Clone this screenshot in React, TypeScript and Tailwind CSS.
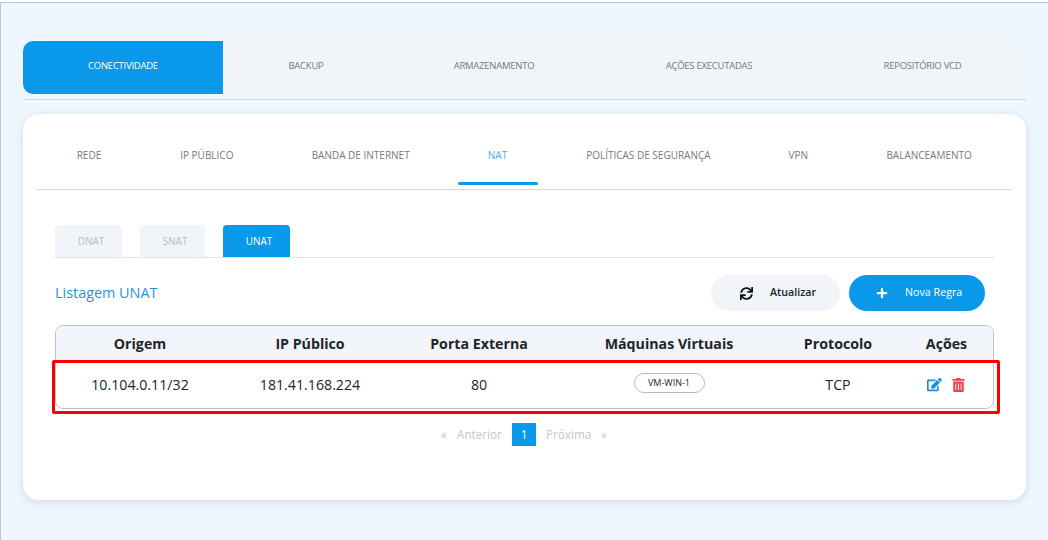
import { FaSync, FaEdit, FaTrashAlt, FaPlus } from "react-icons/fa";

const top = [
  { t: "BACKUP", w: "w-[166px]" },
  { t: "ARMAZENAMENTO", w: "w-[210px]" },
  { t: "AÇÕES EXECUTADAS", w: "w-[220px]" },
  { t: "REPOSITÓRIO VCD", w: "w-[207px]" },
];
const sub = [
  { t: "REDE", w: "w-[104px]" },
  { t: "IP PÚBLICO", w: "w-[132px]" },
  { t: "BANDA DE INTERNET", w: "w-[176px]" },
  { t: "NAT", w: "w-[98px]", active: true },
  { t: "POLÍTICAS DE SEGURANÇA", w: "w-[204px]" },
  { t: "VPN", w: "w-[96px]" },
  { t: "BALANCEAMENTO", w: "w-[166px]" },
];
const cols = "grid grid-cols-[168px_172px_166px_214px_124px_93px] text-center";

export default function App() {
  return (
    <div className="relative h-[540px] w-[1048px] overflow-hidden bg-white pt-[2px] font-['Open_Sans',sans-serif]">
      <div className="h-[538px] border-t border-l border-[#bfc3cb] bg-[#eff7fe] pl-[22px] pt-[38px]">
        <div className="w-[1003px] border-b border-[#cdd5e0] pb-[5px]">
          <div className="flex h-[53px] items-center rounded-[10px] bg-[#f1f5f8] pb-[3px] text-[9.5px] tracking-[-0.25px] text-[#77797c]">
            <div className="-mb-[3px] flex h-[53px] w-[200px] items-center justify-center rounded-l-[10px] bg-[#0a98ea] pb-[3px] text-white">CONECTIVIDADE</div>
            {top.map((x) => (
              <div key={x.t} className={`${x.w} text-center`}>{x.t}</div>
            ))}
          </div>
        </div>
        <div className="mt-[14px] h-[386px] w-[1003px] rounded-[16px] bg-white px-[14px] shadow-[0_2px_10px_rgba(120,140,170,0.25)]">
          <div className="flex h-[76px] w-[975px] border-b border-[#d3d6da] text-[10px] text-[#77797c]">
            {sub.map((x) => (
              <div key={x.t} className={`${x.w} relative pt-[34px] text-center leading-[14px] ${x.active ? "text-[#4aaef0]" : ""}`}>
                {x.t}
                {x.active && <div className="absolute bottom-[4px] left-[9px] h-[3px] w-[80px] rounded-full bg-[#0a98ea]" />}
              </div>
            ))}
          </div>
          <div className="ml-[18px] mt-[35px] flex h-[33px] w-[939px] items-stretch gap-[18px] border-b border-[#dfe2e6] text-[10px]">
            <div className="flex w-[67px] items-center justify-center rounded-t-[4px] bg-[#f1f4f8] pl-[5px] text-[#b9bcc0]">DNAT</div>
            <div className="flex w-[65px] items-center justify-center rounded-t-[4px] bg-[#f1f4f8] pl-[5px] text-[#b9bcc0]">SNAT</div>
            <div className="flex w-[67px] items-center justify-center rounded-t-[4px] bg-[#0a98ea] pl-[5px] text-white">UNAT</div>
          </div>
          <div className="ml-[18px] mt-[17px] flex h-[36px] w-[930px] items-center justify-between">
            <div className="text-[14.4px] text-[#1f93e0]">Listagem UNAT</div>
            <div className="flex gap-[9px] text-[10.7px]">
              <div className="flex h-[36px] w-[129px] items-center rounded-full bg-[#f1f4f8] pl-[29px] font-semibold text-[#212529]">
                <FaSync className="mr-[17px] h-[13px] w-[13px] text-[#111]" />
                <span className="-mt-[2px]">Atualizar</span>
              </div>
              <div className="flex h-[36px] w-[136px] items-center rounded-full bg-[#0a98ea] pl-[27px] text-white">
                <FaPlus className="mr-[17px] h-[12px] w-[12px]" />
                <span className="-mt-[2px]">Nova Regra</span>
              </div>
            </div>
          </div>
          <div className="ml-[18px] mt-[14px] h-[84px] w-[939px] overflow-hidden rounded-[8px] border border-[#bfc3c9] text-[14.2px] text-[#212529]">
            <div className={`${cols} h-[35px] items-center bg-[#f1f4f8] font-bold`}>
              <div>Origem</div>
              <div>IP Público</div>
              <div>Porta Externa</div>
              <div>Máquinas Virtuais</div>
              <div>Protocolo</div>
              <div>Ações</div>
            </div>
            <div className={`${cols} h-[47px] items-center`}>
              <div>10.104.0.11/32</div>
              <div>181.41.168.224</div>
              <div>80</div>
              <div className="flex justify-center">
                <span className="-mt-[4px] flex h-[20px] w-[71px] items-center justify-center rounded-full border border-[#b5bac2] text-[9px]">VM-WIN-1</span>
              </div>
              <div>TCP</div>
              <div className="flex items-center justify-center gap-[10px] pr-[1px]">
                <FaEdit className="h-[15px] w-[15px] text-[#1c8fe3]" />
                <FaTrashAlt className="h-[14px] w-[13px] text-[#ef3e52]" />
              </div>
            </div>
          </div>
          <div className="ml-[18px] mt-[14px] flex h-[23px] w-[939px] items-center text-[11.7px] text-[#c3c7cc]">
            <span className="ml-[386px] w-[16px]">«</span>
            <span className="w-[55px]">Anterior</span>
            <span className="flex h-[23px] w-[24px] items-center justify-center bg-[#0a98ea] text-white">1</span>
            <span className="ml-[10px] w-[55px]">Próxima</span>
            <span>»</span>
          </div>
        </div>
      </div>
      <div className="absolute left-[52px] top-[360px] h-[54px] w-[948px] rounded-[2px] border-[3px] border-[#fa0000]" />
    </div>
  );
}
